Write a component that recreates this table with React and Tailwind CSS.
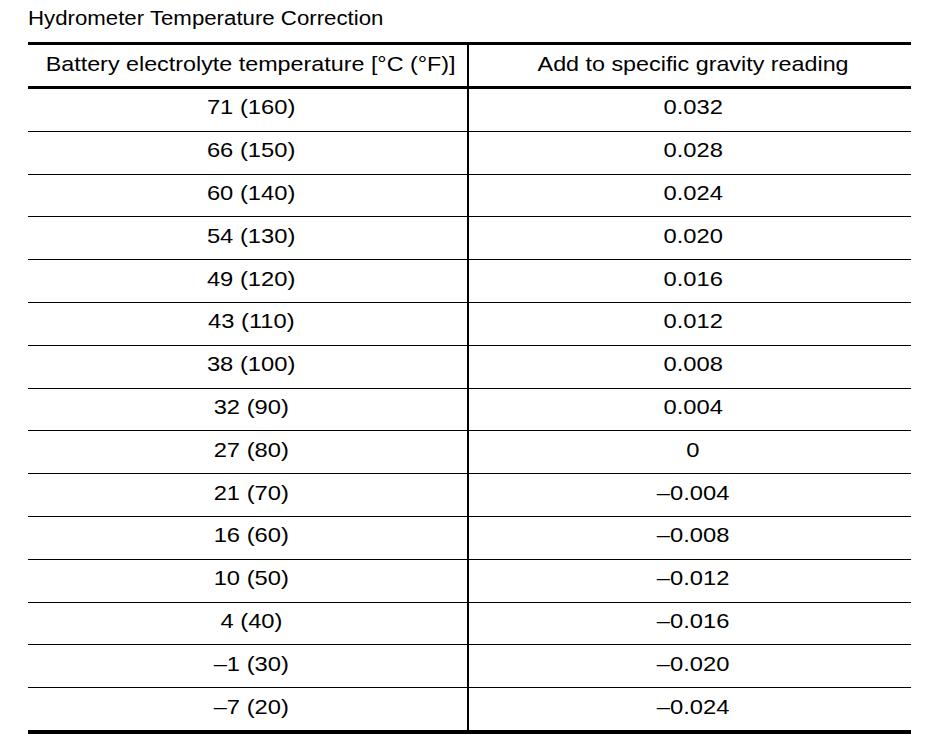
const rows = [
  ["71 (160)", "0.032"],
  ["66 (150)", "0.028"],
  ["60 (140)", "0.024"],
  ["54 (130)", "0.020"],
  ["49 (120)", "0.016"],
  ["43 (110)", "0.012"],
  ["38 (100)", "0.008"],
  ["32 (90)", "0.004"],
  ["27 (80)", "0"],
  ["21 (70)", "\u20130.004"],
  ["16 (60)", "\u20130.008"],
  ["10 (50)", "\u20130.012"],
  ["4 (40)", "\u20130.016"],
  ["\u20131 (30)", "\u20130.020"],
  ["\u20137 (20)", "\u20130.024"],
];

export default function App() {
  return (
    <div className="w-[944px] h-[746px] bg-white text-black font-['Liberation_Sans',Arial,sans-serif] overflow-hidden">
      <div className="pl-[28px] pt-[6px] h-[42px] text-[19.5px] leading-[24px]">
        <span className="inline-block origin-left scale-x-[1.14]">Hydrometer Temperature Correction</span>
      </div>
      <div className="ml-[28px] w-[883px] border-t-[3px] border-b-[4px] border-black">
        <div className="flex h-[44px] border-b-[3px] border-black text-[21px] leading-[24px]">
          <div className="w-[441px] flex items-center justify-center border-r-2 border-black pb-[4px] pl-[7px]">
            <span className="inline-block scale-x-[1.11]">Battery electrolyte temperature [°C (°F)]</span>
          </div>
          <div className="flex-1 flex items-center justify-center pb-[4px] pl-[6px]">
            <span className="inline-block scale-x-[1.11]">Add to specific gravity reading</span>
          </div>
        </div>
        <div className="flex flex-col h-[641px]">
          {rows.map((r, i) => (
            <div
              key={i}
              className={
                "flex flex-1 text-[21px] leading-[24px] " +
                (i < rows.length - 1 ? "border-b-[1.5px] border-black" : "")
              }
            >
              <div className="w-[441px] flex items-center justify-center border-r-2 border-black pb-[5px] pl-[8px]">
                <span className="inline-block scale-x-[1.13]">{r[0]}</span>
              </div>
              <div className="flex-1 flex items-center justify-center pb-[5px] pl-[6px]">
                <span className="inline-block scale-x-[1.13]">{r[1]}</span>
              </div>
            </div>
          ))}
        </div>
      </div>
    </div>
  );
}
